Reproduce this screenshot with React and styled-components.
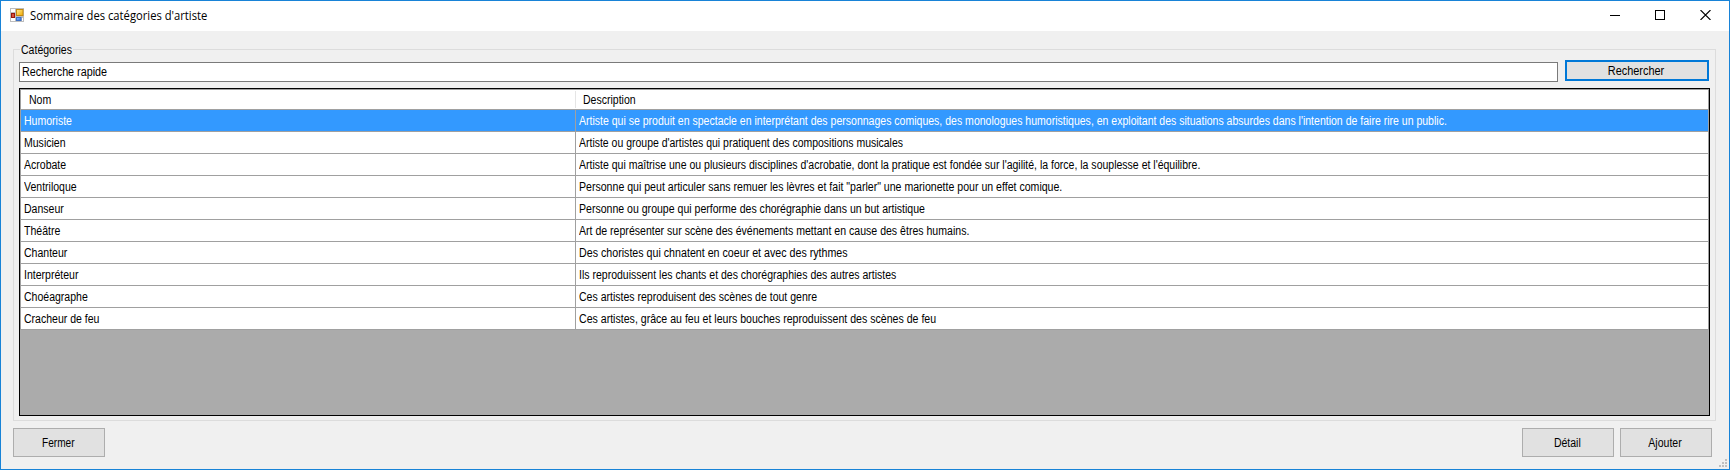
import React from "react";
import styled, { createGlobalStyle } from "styled-components";

const GlobalStyle = createGlobalStyle`
  *, *::before, *::after { box-sizing: border-box; }
  html, body { margin: 0; padding: 0; }
  body { background: #f0f0f0; overflow: hidden; }
`;

const Window = styled.div`
  display: flex;
  flex-direction: column;
  width: 1730px;
  height: 470px;
  border: 1px solid #1883d7;
  background: #f0f0f0;
  color: #000;
  font: 12px/14px "Liberation Sans", Arial, sans-serif;
  white-space: nowrap;
`;

const TitleBar = styled.header`
  display: flex;
  align-items: flex-start;
  height: 30px;
  padding: 7px 18px 0 9px;
  background: #fff;
`;

const Title = styled.h1`
  flex: 1;
  margin: 0 0 0 6px;
  font: 400 12px/16px "Open Sans", "Noto Sans", sans-serif;
  transform: scaleX(0.935);
  transform-origin: left;
`;

const WindowControls = styled.div`
  display: flex;
  gap: 35px;
  padding-top: 2px;

  svg { display: block; }
`;

const Label = styled.span`
  display: inline-block;
  transform: scaleX(${(p) => p.$scale || 0.877});
  transform-origin: ${(p) => p.$origin || "left"};
`;

const Body = styled.main`
  display: flex;
  flex-direction: column;
  flex: 1;
  padding: 18px 13px 0 12px;
`;

const Group = styled.section`
  height: 372px;
  border: 1px solid #dcdcdc;
  padding: 0 5px 4px;
  display: flex;
  flex-direction: column;
`;

const Legend = styled.div`
  width: 53px;
  height: 14px;
  margin: -7px 0 3px 1px;
  padding-left: 1.4px;
  background: #f0f0f0;
`;

const SearchRow = styled.div`
  display: flex;
  align-items: flex-start;
  gap: 7px;
  height: 28px;
  padding-right: 1px;
`;

const SearchBox = styled.div`
  flex: 1;
  height: 20px;
  margin-top: 2px;
  padding: 2px 0 0 1.6px;
  border: 1px solid #7a7a7a;
  background: #fff;
`;

const Button = styled.button`
  width: ${(p) => (p.$primary ? 144 : 92)}px;
  height: ${(p) => (p.$primary ? 21 : 29)}px;
  padding: ${(p) => (p.$primary ? "2px 2px 0 0" : "7px 2px 0 0")};
  display: flex;
  justify-content: center;
  align-items: flex-start;
  border: ${(p) => (p.$primary ? "2px solid #0078d7" : "1px solid #adadad")};
  border-radius: 0;
  background: #e1e1e1;
  color: #000;
  font: inherit;
`;

const Grid = styled.div`
  flex: 1;
  border: 1px solid #000;
  background: #ababab;
`;

const Line = styled.div`
  display: grid;
  grid-template-columns: 555px 1fr;
  border: 1px solid #a0a0a0;
  border-top-width: 0;
`;

const HeaderLine = styled(Line)`
  height: 21px;
  border-top-width: 1px;
  background: #fff;
`;

const HeaderCell = styled.div`
  margin: 1px 0;
  padding: 2px 0 0 ${(p) => (p.$first ? 8 : 7)}px;
  border-right: ${(p) => (p.$first ? "1px solid #e5e5e5" : "0")};
`;

const Row = styled(Line)`
  height: 22px;
  background: ${(p) => (p.$selected ? "#3399ff" : "#fff")};
  color: ${(p) => (p.$selected ? "#fff" : "#000")};
`;

const Cell = styled.div`
  padding: 4px 0 0 2.8px;
  border-right: ${(p) => (p.$first ? "1px solid #a0a0a0" : "0")};
`;

const Footer = styled.footer`
  display: flex;
  gap: 6px;
  padding: 7px 4px 0 0;
`;

const Spacer = styled.div`
  flex: 1;
`;

const Grip = styled.svg`
  position: absolute;
  left: 1719px;
  top: 459px;
`;

/* name, description, width factor of the description */
const categories = [
  ["Humoriste", "Artiste qui se produit en spectacle en interprétant des personnages comiques, des monologues humoristiques, en exploitant des situations absurdes dans l'intention de faire rire un public.", 0.877],
  ["Musicien", "Artiste ou groupe d'artistes qui pratiquent des compositions musicales", 0.873],
  ["Acrobate", "Artiste qui maîtrise une ou plusieurs disciplines d'acrobatie, dont la pratique est fondée sur l'agilité, la force, la souplesse et l'équilibre.", 0.876],
  ["Ventriloque", "Personne qui peut articuler sans remuer les lèvres et fait \"parler\" une marionette pour un effet comique.", 0.881],
  ["Danseur", "Personne ou groupe qui performe des chorégraphie dans un but artistique", 0.879],
  ["Théâtre", "Art de représenter sur scène des événements mettant en cause des êtres humains.", 0.88],
  ["Chanteur", "Des choristes qui chnatent en coeur et avec des rythmes", 0.889],
  ["Interpréteur", "Ils reproduissent les chants et des chorégraphies des autres artistes", 0.876],
  ["Choéagraphe", "Ces artistes reproduisent des scènes de tout genre", 0.877],
  ["Cracheur de feu", "Ces artistes, grâce au feu et leurs bouches reproduissent des scènes de feu", 0.882],
];

const AppIcon = () => (
  <svg width="14" height="14" viewBox="0 0 14 14">
    <defs>
      <linearGradient id="gold" x1="0" y1="0" x2="1" y2="1">
        <stop offset="0" stopColor="#ffeb96" />
        <stop offset="1" stopColor="#f0aa00" />
      </linearGradient>
      <linearGradient id="blue" x1="0" y1="0" x2="1" y2="1">
        <stop offset="0" stopColor="#8fc0ff" />
        <stop offset="1" stopColor="#2a6be0" />
      </linearGradient>
    </defs>
    <rect width="14" height="14" fill="#bdbdbd" />
    <path d="M1 1h4v3H1zM1 10h4v3H1zM12 10h1v3h-1z" fill="#fff" />
    <rect x="6.5" y="1.5" width="6.5" height="6" fill="url(#gold)" stroke="#c48a10" />
    <rect x="1.5" y="5.5" width="3" height="4" fill="#d8503c" stroke="#96160c" />
    <rect x="6.5" y="9.5" width="4.5" height="3" fill="url(#blue)" stroke="#3c6fc4" />
  </svg>
);

const Minimize = () => (
  <svg width="10" height="10"><path d="M0 5.5h10" stroke="#000" /></svg>
);
const Maximize = () => (
  <svg width="10" height="10"><rect x=".5" y=".5" width="9" height="9" fill="none" stroke="#000" /></svg>
);
const Close = () => (
  <svg width="11" height="10"><path d="M.5 0l10 10M10.5 0l-10 10" stroke="#000" strokeWidth="1.1" /></svg>
);

export default function App() {
  return (
    <Window>
      <GlobalStyle />
      <TitleBar>
        <AppIcon />
        <Title>Sommaire des catégories d'artiste</Title>
        <WindowControls>
          <Minimize />
          <Maximize />
          <Close />
        </WindowControls>
      </TitleBar>
      <Body>
        <Group>
          <Legend><Label>Catégories</Label></Legend>
          <SearchRow>
            <SearchBox><Label $scale={0.898}>Recherche rapide</Label></SearchBox>
            <Button $primary><Label $origin="center" $scale={0.91}>Rechercher</Label></Button>
          </SearchRow>
          <Grid>
            <HeaderLine>
              <HeaderCell $first><Label>Nom</Label></HeaderCell>
              <HeaderCell><Label>Description</Label></HeaderCell>
            </HeaderLine>
            {categories.map(([name, description, scale], i) => (
              <Row key={name} $selected={i === 0}>
                <Cell $first><Label>{name}</Label></Cell>
                <Cell><Label $scale={scale}>{description}</Label></Cell>
              </Row>
            ))}
          </Grid>
        </Group>
        <Footer>
          <Button><Label $origin="center" $scale={0.84}>Fermer</Label></Button>
          <Spacer />
          <Button><Label $origin="center">Détail</Label></Button>
          <Button><Label $origin="center">Ajouter</Label></Button>
        </Footer>
      </Body>
      <Grip width="8" height="8">
        <path d="M6 0h2v2H6zM3 3h2v2H3zM6 3h2v2H6zM0 6h2v2H0zM3 6h2v2H3zM6 6h2v2H6z" fill="#bfbfbf" />
      </Grip>
    </Window>
  );
}
